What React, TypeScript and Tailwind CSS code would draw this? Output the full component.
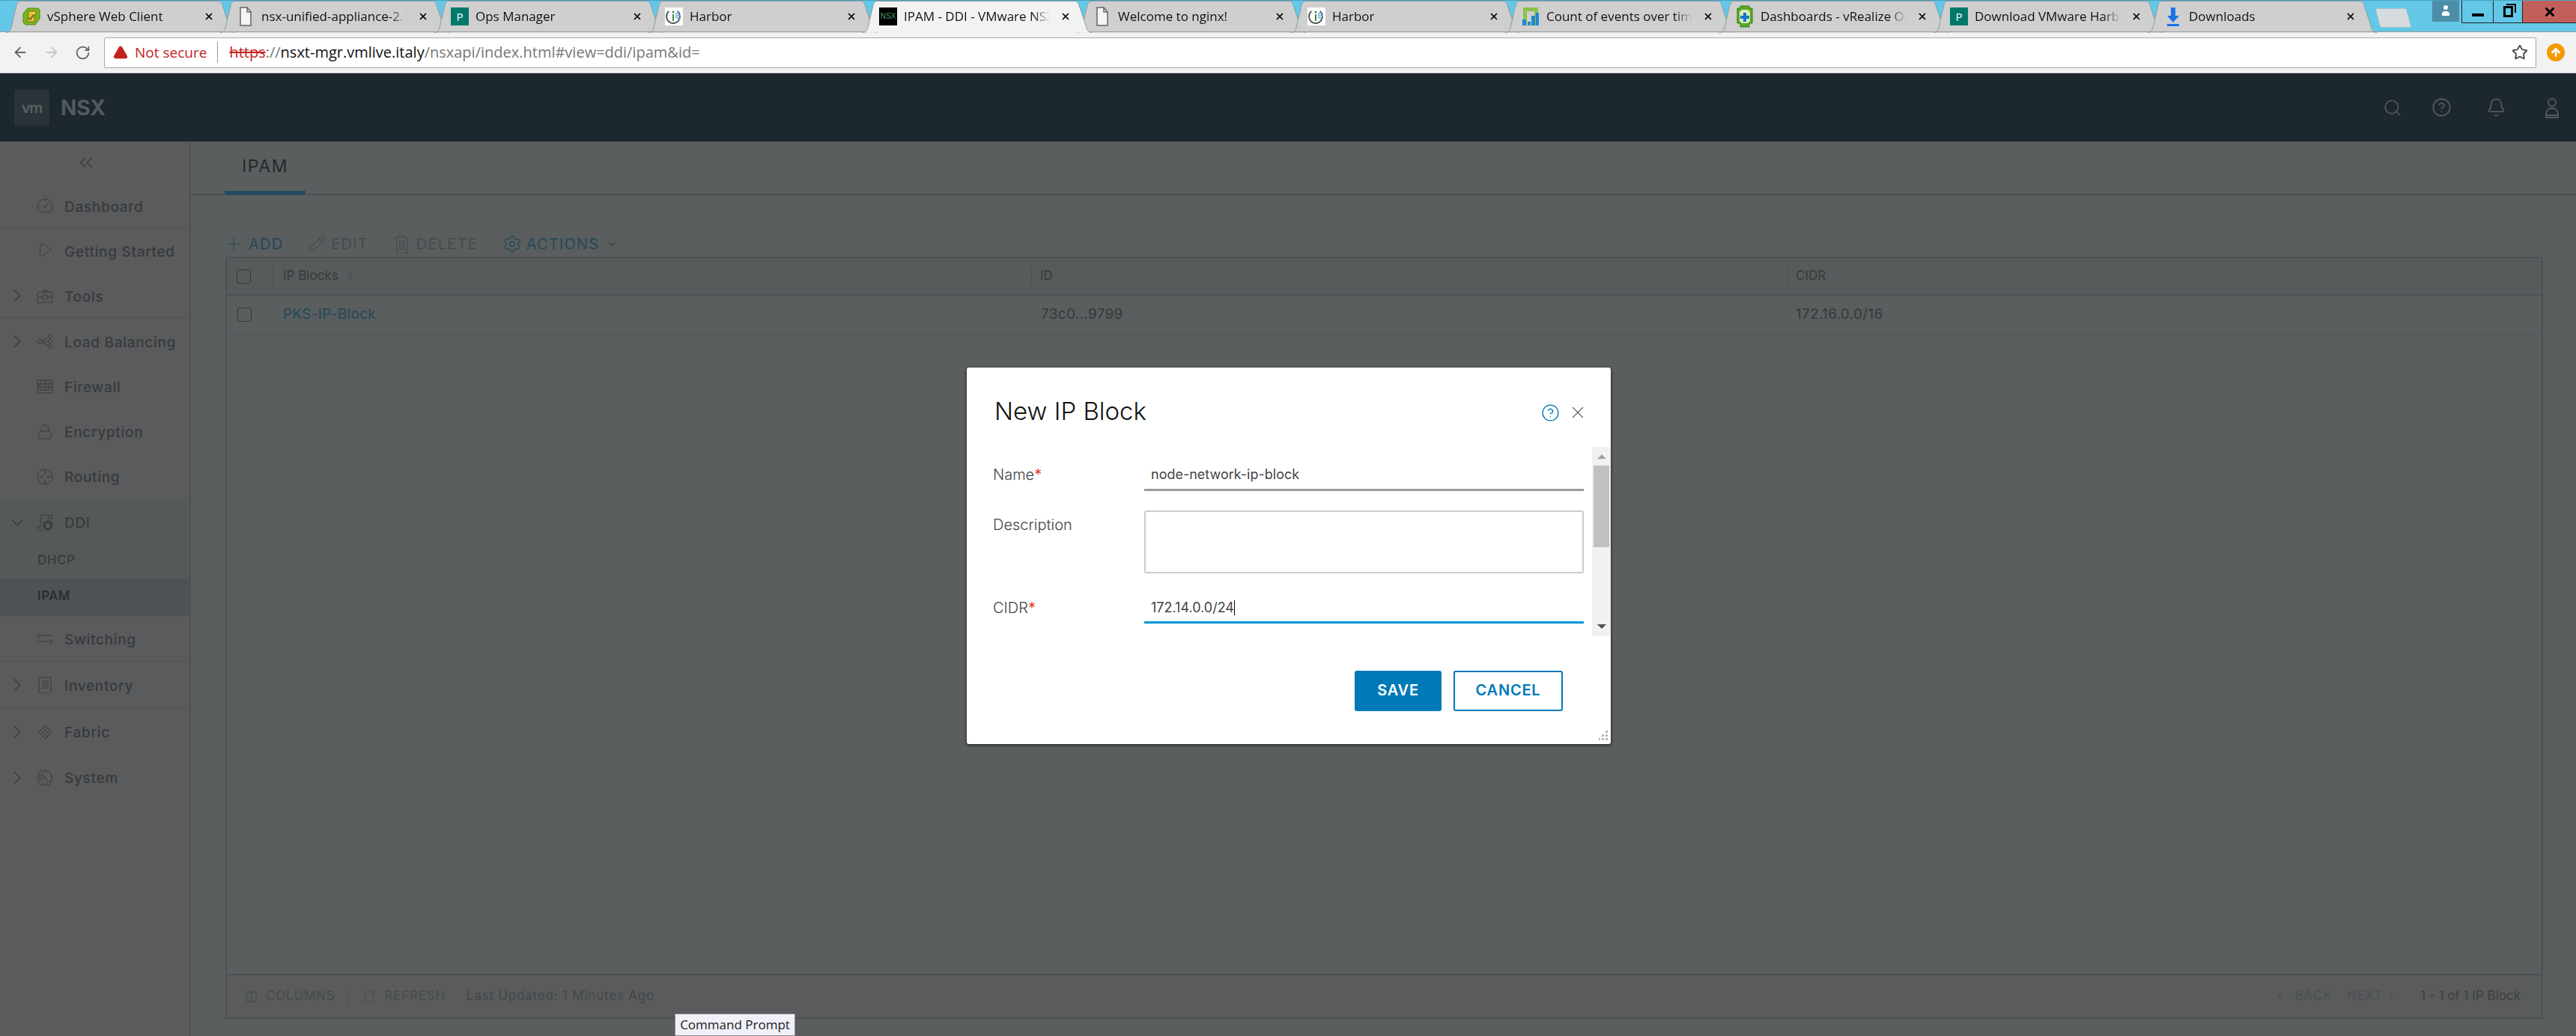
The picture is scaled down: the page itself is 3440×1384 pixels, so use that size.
import type { ReactNode } from 'react';
import { ArrowLeft, ArrowRight, RotateCw, Star, ChevronRight, ChevronDown, ChevronLeft, ChevronsLeft, Play, Lock, Search, Bell, Plus, Pencil, Settings, ArrowUp, X, CircleHelp, Columns2, RefreshCw, TriangleAlert } from 'lucide-react';

function VsphereIcon() {
  return (
    <svg width="26" height="26" viewBox="0 0 26 26">
      <path d="M8 2h14l2 2v12l-6 8H5l-3-3V9z" fill="#7ab51d" stroke="#4d8a12" />
      <path d="M9 6h10v5h-5v4h-5zM17 13v7H7v-3h6v-4z" fill="#f0c63c" stroke="#6f6a20" />
    </svg>
  );
}

function DocIcon() {
  return (
    <svg width="18" height="26" viewBox="0 0 18 26" fill="#f4f4f4" stroke="#666" strokeWidth="1.5">
      <path d="M2 1h9l5 6v18H2z" />
      <path d="M11 1v6h5" fill="none" />
    </svg>
  );
}

function PIcon() {
  return <span className="w-6 h-6 bg-[#00796b] text-white text-[15px] leading-6 text-center font-['Open_Sans',sans-serif]">P</span>;
}

function HarborIcon() {
  return (
    <svg width="24" height="24" viewBox="0 0 24 24" className="bg-white">
      <circle cx="11" cy="12" r="9" fill="none" stroke="#555" strokeWidth="2" strokeDasharray="44 12" transform="rotate(-50 11 12)" />
      <path d="M10 9h2v9h-2z" fill="#3c8f3c" />
      <circle cx="11" cy="6" r="1.5" fill="#3c8f3c" />
      <path d="M14 9l6-3M14 11h7M14 13l6 2" stroke="#6ea8dc" strokeWidth="1.5" />
    </svg>
  );
}

function NsxIcon() {
  return <span className="w-6 h-6 bg-black text-[#4f9a6f] text-[10px] leading-6 text-center font-['Liberation_Sans',sans-serif]">NSX</span>;
}

function BarsIcon() {
  return (
    <svg width="24" height="26" viewBox="0 0 24 26">
      <path d="M2 1h20v24h-5V6H7v19H2z" fill="#8bc34a" />
      <path d="M1 17h5v8H1zM8 20h4v5H8zM13 12h5v13h-5zM19 8h4v17h-4z" fill="#1e88d2" />
    </svg>
  );
}

function VropsIcon() {
  return (
    <svg width="24" height="30" viewBox="0 0 24 30">
      <path d="M6 1h12v3h4v20h-4v5H6v-5H2V4h4z" fill="#5cab1e" stroke="#2e7d12" />
      <path d="M7 6h10v2h2v14h-2v2H7v-2H5V8h2z" fill="#d7ecc0" />
      <path d="M10 10h4v4h4v4h-4v4h-4v-4H6v-4h4z" fill="#1976c8" />
    </svg>
  );
}

function DownloadIcon() {
  return (
    <svg width="18" height="26" viewBox="0 0 18 26" fill="#1a73e8">
      <path d="M6 1h6v11h5l-8 9-8-9h5z" />
      <path d="M1 23h16v3H1z" />
    </svg>
  );
}

const tabs = [
  { title: 'vSphere Web Client', icon: <VsphereIcon /> },
  { title: 'nsx-unified-appliance-2.1', icon: <DocIcon /> },
  { title: 'Ops Manager', icon: <PIcon /> },
  { title: 'Harbor', icon: <HarborIcon /> },
  { title: 'IPAM - DDI - VMware NSX', icon: <NsxIcon />, active: true },
  { title: 'Welcome to nginx!', icon: <DocIcon /> },
  { title: 'Harbor', icon: <HarborIcon /> },
  { title: 'Count of events over time', icon: <BarsIcon /> },
  { title: 'Dashboards - vRealize Operations', icon: <VropsIcon /> },
  { title: 'Download VMware Harbor', icon: <PIcon /> },
  { title: 'Downloads', icon: <DownloadIcon /> },
];

function ChromeTab({ title, icon, active }: { title: string; icon: ReactNode; active?: boolean }) {
  return (
    <div className={`relative w-[306px] h-[43px] shrink-0 -ml-[20px] first:ml-0 ${active ? 'z-10' : ''}`}>
      <svg width="306" height="43" className="absolute inset-0">
        <path
          d="M0 42.5C4 42.5 6 40 7 36L14 6C15 2 17 .5 20 .5H283C286 .5 288 2 289 6L299 36C300 40 302 42.5 306 42.5"
          fill={active ? '#f2f2f2' : '#cfcfcf'}
          stroke="#8f9ba0"
        />
      </svg>
      <div className="relative h-full flex items-center pl-[21px] pr-[28px] pb-[2px]">
        <div className="w-[26px] flex justify-center shrink-0">{icon}</div>
        <span className="ml-[8px] w-[195px] whitespace-nowrap overflow-hidden text-[17px] text-[#111] [mask-image:linear-gradient(to_right,black_88%,transparent)]">
          {title}
        </span>
        <X className="ml-auto w-[14px] h-[14px] text-black" strokeWidth={3} />
      </div>
    </div>
  );
}

function TabStrip() {
  return (
    <div className="relative h-[43px] flex pl-[8px] bg-[#63c8e8] border-t border-[#4a9fbc] font-['Open_Sans',sans-serif]">
      {tabs.map((t, i) => (
        <ChromeTab key={i} title={t.title} icon={t.icon} active={t.active} />
      ))}
      <div className="w-[42px] h-[26px] ml-[1px] mt-[10px] bg-[#d6dcde] border border-[#a9c4cf] rounded-[3px] [transform:skewX(15deg)]" />
      <div className="ml-auto flex items-start">
        <div className="w-[36px] h-[28px] mr-[3px] bg-[#4c8ea8] flex justify-center pt-[5px]">
          <svg width="16" height="16" viewBox="0 0 16 16" fill="#fff">
            <circle cx="8" cy="4" r="3" />
            <path d="M3 15v-4l3-2h4l3 2v4z" />
          </svg>
        </div>
        <div className="w-[42px] h-[30px] border-b border-l border-[#222] flex items-end justify-center pb-[8px]">
          <span className="w-[16px] h-[4px] bg-black" />
        </div>
        <div className="w-[39px] h-[30px] border-b border-l border-[#222] flex items-center justify-center">
          <span className="relative w-[13px] h-[15px] border-[3px] border-black">
            <span className="absolute -top-[6px] left-[1px] w-[13px] h-[12px] border-t-[2px] border-r-[2px] border-black" />
          </span>
        </div>
        <div className="w-[72px] h-[30px] bg-[#c1605a] border-b border-l border-[#222] flex items-center justify-center">
          <X className="w-[18px] h-[18px] text-black" strokeWidth={4} />
        </div>
      </div>
      <div className="absolute left-0 right-0 bottom-0 h-px bg-[#9a9a9a]" />
    </div>
  );
}

function AddressBar() {
  return (
    <div className="h-[55px] flex items-center bg-[#f2f2f2] border-b border-[#c0c0c0] font-['Open_Sans',sans-serif]">
      <div className="w-[139px] flex items-center shrink-0 pl-[16px] gap-[20px]">
        <ArrowLeft className="w-[22px] h-[22px] text-[#5f6368]" />
        <ArrowRight className="w-[22px] h-[22px] text-[#c4c6c8]" />
        <RotateCw className="w-[21px] h-[21px] text-[#5f6368]" />
      </div>
      <div className="w-[3248px] h-[41px] flex items-center pl-[11px] pr-[10px] bg-white border border-[#a9a9a9] rounded-[2px] text-[20px] whitespace-nowrap">
        <TriangleAlert className="w-[20px] h-[20px] text-[#c5221f] fill-[#c5221f] stroke-[#c5221f]" />
        <span className="ml-[9px] text-[19px] text-[#c5221f]">Not secure</span>
        <span className="ml-[14px] mr-[15px] w-px h-[28px] bg-[#999]" />
        <span className="text-[#c5221f] line-through">https</span>
        <span className="text-[#777]">://</span>
        <span className="text-[#111]">nsxt-mgr.vmlive.italy</span>
        <span className="text-[#777]">/nsxapi/index.html#view=ddi/ipam&amp;id=</span>
        <Star className="ml-auto w-[22px] h-[22px] text-[#444]" />
      </div>
      <div className="ml-[14px] w-[24px] h-[24px] rounded-full bg-[#f29900] flex items-center justify-center">
        <ArrowUp className="w-[16px] h-[16px] text-white" strokeWidth={4} />
      </div>
    </div>
  );
}

function TopHeader() {
  return (
    <div className="h-[91px] flex items-center pl-[19px] pr-[19px] bg-[#1c272e] font-['Inter',sans-serif]">
      <div className="w-[47px] h-[48px] bg-[#2a3338] rounded-[2px] flex items-center justify-center text-[#5b6063] text-[20px] font-semibold tracking-[-1px]">vm</div>
      <span className="ml-[15px] text-[28px] font-bold text-[#53595c]">NSX</span>
      <div className="ml-auto flex items-center text-[#53585b]">
        <Search className="w-[26px] h-[26px]" strokeWidth={1.6} />
        <CircleHelp className="ml-[39px] w-[27px] h-[27px]" strokeWidth={1.6} />
        <Bell className="ml-[46px] w-[27px] h-[27px]" strokeWidth={1.6} />
        <svg width="26" height="28" viewBox="0 0 26 28" fill="none" stroke="currentColor" strokeWidth="1.8" className="ml-[48px]">
          <circle cx="13" cy="7" r="5" />
          <path d="M5 24v-4l4-5h8l4 5v4zM5 24h16v3H5z" />
        </svg>
      </div>
    </div>
  );
}

function NavSvg({ children }: { children: ReactNode }) {
  return (
    <svg width="22" height="22" viewBox="0 0 22 22" fill="none" stroke="currentColor" strokeWidth="1">
      {children}
    </svg>
  );
}

const navIcons: Record<string, ReactNode> = {
  Dashboard: (
    <NavSvg>
      <path d="M4 19H18C20 17 21 15 21 12A10 10 0 0 0 1 12C1 15 2 17 4 19Z" />
      <path d="M11 12l5-4M3 12h2M17 12h2M11 4v2" />
      <circle cx="11" cy="12" r="1" fill="currentColor" />
    </NavSvg>
  ),
  'Getting Started': <Play className="w-[24px] h-[24px] -translate-y-[2px]" strokeWidth={1} />,
  Tools: (
    <NavSvg>
      <path d="M1 8q0-2 2-2h16q2 0 2 2v12H1zM1 13h7M14 13h7M8 4h6V6H8zM8 10h6v6H8z" />
    </NavSvg>
  ),
  'Load Balancing': (
    <NavSvg>
      <circle cx="4" cy="11" r="3" />
      <circle cx="18" cy="4" r="2.5" />
      <circle cx="18" cy="11" r="2.5" />
      <circle cx="18" cy="18" r="2.5" />
      <path d="M7 10l9-5M7 11h8M7 12l9 5" />
    </NavSvg>
  ),
  Firewall: (
    <NavSvg>
      <path d="M1 2h20v17H1zM1 7h20M1 11h20M1 15h20M6 2v5M12 2v5M17 2v5M4 7v4M10 7v4M16 7v4M6 11v4M12 11v4M17 11v4" />
    </NavSvg>
  ),
  Encryption: <Lock className="w-[22px] h-[22px]" strokeWidth={1} />,
  Routing: (
    <NavSvg>
      <circle cx="11" cy="11" r="10" />
      <path d="M11 3v5M9 5l2-2 2 2M11 19v-5M9 17l2 2 2-2M3 11h5M6 9l2 2-2 2M19 11h-5M16 9l-2 2 2 2" />
    </NavSvg>
  ),
  DDI: (
    <NavSvg>
      <path d="M8 1h13v5h-5V1M8 1q-3 0-3 3v13M5 17H1v2q0 2 2 2h6" />
      <circle cx="15" cy="15" r="5" strokeWidth="3" />
    </NavSvg>
  ),
  Switching: (
    <NavSvg>
      <path d="M1 6h20M5 2L1 6l4 4M1 14h20M17 10l4 4-4 4" />
    </NavSvg>
  ),
  Inventory: (
    <NavSvg>
      <path d="M3 1h16v21H3zM7 6h9M7 9h9M7 12h9M7 15h9" />
    </NavSvg>
  ),
  Fabric: (
    <NavSvg>
      <path d="M2 11L11 2M5 15L15 5M8 18L18 8M11 20L20 11M2 11l9 9M5 8l10 10M8 5l10 10M11 2l9 9" />
    </NavSvg>
  ),
  System: (
    <NavSvg>
      <path d="M9 1h4l1 3 3-1 3 3-2 3 3 1v4l-3 1 1 3-3 3-3-2-1 3H9l-1-3-3 2-3-3 2-3-3-1V9l3-1-2-3 3-3 3 2z" />
      <path d="M8 7l8 10M8 7a3 3 0 1 0 2 3" />
    </NavSvg>
  ),
};

const navItems: { label: string; h: string; chevron?: 'right' | 'down'; line?: boolean }[] = [
  { label: 'Dashboard', h: 'h-[60px]', line: true },
  { label: 'Getting Started', h: 'h-[60px]' },
  { label: 'Tools', h: 'h-[60px]', chevron: 'right', line: true },
  { label: 'Load Balancing', h: 'h-[61px]', chevron: 'right' },
  { label: 'Firewall', h: 'h-[60px]' },
  { label: 'Encryption', h: 'h-[60px]' },
  { label: 'Routing', h: 'h-[60px]' },
];

const navItemsBelow: typeof navItems = [
  { label: 'Switching', h: 'h-[61px]', line: true },
  { label: 'Inventory', h: 'h-[62px]', chevron: 'right', line: true },
  { label: 'Fabric', h: 'h-[62px]', chevron: 'right' },
  { label: 'System', h: 'h-[60px]', chevron: 'right' },
];

function NavRow({ label, h, chevron, line }: (typeof navItems)[number]) {
  return (
    <div className={`${h} flex items-center pt-[5px] text-[#383a3c] ${line ? 'border-b border-[#505254]' : ''}`}>
      <div className="w-[49px] pl-[9px] shrink-0 -translate-y-[2px]">
        {chevron === 'right' && <ChevronRight className="w-[30px] h-[30px] -ml-[1px]" strokeWidth={1} />}
        {chevron === 'down' && <ChevronDown className="w-[28px] h-[28px]" strokeWidth={1} />}
      </div>
      <div className="w-[22px] h-[22px] flex items-center justify-center -translate-y-[2px]">{navIcons[label]}</div>
      <span className="ml-[15px] text-[19px] font-medium tracking-[0.7px] whitespace-nowrap">{label}</span>
    </div>
  );
}

function Sidebar() {
  return (
    <aside className="w-[255px] shrink-0 bg-[#595b5d] border-r-2 border-[#4e5052] font-['Inter',sans-serif]">
      <div className="h-[56px] flex items-center pl-[100px] text-[#383a3c]">
        <ChevronsLeft className="w-[30px] h-[30px]" strokeWidth={1} />
      </div>
      {navItems.map((n) => (
        <NavRow key={n.label} {...n} />
      ))}
      <div className="bg-[#56595a]">
        <NavRow label="DDI" h="h-[62px]" chevron="down" />
        <div className="h-[45px] pl-[50px] pb-[3px] flex items-center text-[#383a3c] text-[17px] font-medium tracking-[0.5px]">DHCP</div>
        <div className="h-[50px] pl-[50px] pb-[2px] flex items-center bg-[#4d5355] text-[#26292b] text-[17px] font-medium tracking-[0.5px]">IPAM</div>
      </div>
      {navItemsBelow.map((n) => (
        <NavRow key={n.label} {...n} />
      ))}
    </aside>
  );
}

function Checkbox() {
  return <span className="block w-[19px] h-[19px] border border-[#37393b] rounded-[3px]" />;
}

function IpamPanel() {
  return (
    <main className="flex-1 flex flex-col bg-[#5a5e5f] font-['Inter',sans-serif]">
      <div className="h-[72px] shrink-0 pl-[45px] border-b-2 border-[#4d5052]">
        <div className="w-[108px] h-[71px] flex items-center justify-center border-b-[5px] border-[#1f4a5f] text-[23px] text-[#26292b] tracking-[1.6px]">IPAM</div>
      </div>
      <div className="flex-1 flex flex-col pl-[46px] pr-[44px] pb-[23px]">
        <div className="h-[82px] shrink-0 flex items-end text-[20px] tracking-[1.2px]">
          <div className="h-[34px] flex items-center whitespace-nowrap">
            <span className="flex items-center gap-[6px] text-[#25485a]">
              <Plus className="w-[28px] h-[28px] -ml-[3px]" strokeWidth={1} />
              ADD
            </span>
            <span className="ml-[33px] flex items-center gap-[7px] text-[#484b4d]">
              <Pencil className="w-[24px] h-[24px]" strokeWidth={1.2} />
              EDIT
            </span>
            <span className="ml-[33px] flex items-center gap-[7px] text-[#484b4d]">
              <svg width="24" height="28" viewBox="0 0 24 28" fill="none" stroke="currentColor" strokeWidth="1.2">
                <path d="M3 5h18M9 5V2h6v3M5 5v21h14V5M9 9v13M12 9v13M15 9v13" />
              </svg>
              DELETE
            </span>
            <span className="ml-[33px] flex items-center gap-[6px] text-[#25485a]">
              <Settings className="w-[26px] h-[26px]" strokeWidth={1.2} />
              ACTIONS
              <ChevronDown className="ml-[4px] w-[14px] h-[14px] text-[#3a3d3f]" strokeWidth={2} />
            </span>
          </div>
        </div>
        <div className="flex-1 flex flex-col border-2 border-[#4e5153] rounded-[3px] text-[19px] tracking-[0.3px]">
          <div className="h-[50px] shrink-0 grid grid-cols-[61px_1014px_1009px_1fr] items-center bg-[#585b5c] border-b-2 border-[#4e5153] text-[17px] tracking-normal text-[#37393b]">
            <div className="pl-[13px] h-[30px] flex items-center border-r border-[#4e5153]"><Checkbox /></div>
            <div className="pl-[14px] h-[30px] flex items-center gap-[8px] border-r border-[#4e5153]">
              IP Blocks
              <ArrowUp className="w-[16px] h-[16px] text-[#25485a]" strokeWidth={1.3} />
            </div>
            <div className="pl-[11px] h-[30px] flex items-center border-r border-[#4e5153]">ID</div>
            <div className="pl-[11px] h-[30px] flex items-center">CIDR</div>
          </div>
          <div className="h-[52px] shrink-0 grid grid-cols-[61px_1014px_1009px_1fr] items-center border-b border-[#525557] text-[#37393b]">
            <div className="pl-[14px]"><Checkbox /></div>
            <div className="pl-[14px] text-[#25485a]">PKS-IP-Block</div>
            <div className="pl-[12px]">73c0...9799</div>
            <div className="pl-[11px]">172.16.0.0/16</div>
          </div>
          <div className="flex-1" />
          <div className="h-[58px] shrink-0 flex items-center pl-[24px] pr-[28px] bg-[#595b5c] border-t-2 border-[#4e5153] text-[17px] tracking-[0.8px] text-[#484b4d] whitespace-nowrap">
            <Columns2 className="w-[17px] h-[17px]" strokeWidth={1.5} />
            <span className="ml-[11px]">COLUMNS</span>
            <span className="ml-[18px] w-px h-[22px] bg-[#4e5153]" />
            <RefreshCw className="ml-[18px] w-[18px] h-[18px]" strokeWidth={1.2} />
            <span className="ml-[11px]">REFRESH</span>
            <span className="ml-[28px] text-[#44474a]">Last Updated: 1 Minutes Ago</span>
            <span className="ml-auto flex items-center text-[#4d5052]">
              <ChevronLeft className="w-[18px] h-[18px]" strokeWidth={1.5} />
              <span className="ml-[11px]">BACK</span>
              <span className="ml-[20px]">NEXT</span>
              <ChevronRight className="ml-[2px] w-[18px] h-[18px]" strokeWidth={1.5} />
            </span>
            <span className="ml-[30px] text-[#3d3f41] tracking-normal">1 - 1 of 1 IP Block</span>
          </div>
        </div>
      </div>
    </main>
  );
}

function FormRow({ label, required, children, className, labelClassName }: { label: string; required?: boolean; children: ReactNode; className: string; labelClassName?: string }) {
  return (
    <div className={`flex ${className}`}>
      <label className={`w-[202px] shrink-0 text-[20px] leading-[28px] font-light text-[#444] ${labelClassName ?? ''}`}>
        {label}
        {required && <span className="text-[#e12200]">*</span>}
      </label>
      <div className="flex-1">{children}</div>
    </div>
  );
}

function NewIpBlockModal() {
  return (
    <div className="absolute left-[1291px] top-[491px] w-[860px] h-[503px] flex flex-col bg-white rounded-[3px] shadow-[0_1px_4px_rgba(0,0,0,0.7)] font-['Inter',sans-serif]">
      <div className="h-[106px] shrink-0 flex items-center pl-[37px] pr-[31px] pt-[10px]">
        <h2 className="text-[33px] font-light text-[#111] leading-none">New IP Block</h2>
        <CircleHelp className="ml-auto mt-[4px] w-[25px] h-[25px] text-[#0079b8]" strokeWidth={1.3} />
        <X className="ml-[11px] mt-[4px] w-[26px] h-[26px] text-[#666]" strokeWidth={1.2} />
      </div>
      <div className="h-[253px] shrink-0 flex">
        <div className="flex-1 pl-[35px] pr-[11px] pt-[23px]">
          <FormRow label="Name" required className="h-[60px]">
            <div className="h-[36px] pl-[9px] border-b-[3px] border-[#9a9a9a] text-[18px] leading-[28px] text-[#444]">node-network-ip-block</div>
          </FormRow>
          <FormRow label="Description" labelClassName="pt-[7px]" className="h-[118px]">
            <div className="h-[84px] mt-[2px] border-2 border-[#cccccc] rounded-[3px]" />
          </FormRow>
          <FormRow label="CIDR" required className="h-[35px]">
            <div className="h-[35px] pl-[9px] flex items-start border-b-[3px] border-[#0095d3] text-[18px] leading-[28px] text-[#444]">
              172.14.0.0/24
              <span className="mt-[4px] w-px h-[20px] bg-black" />
            </div>
          </FormRow>
        </div>
        <div className="w-[25px] shrink-0 bg-[#f1f1f1] flex flex-col items-center">
          <span className="mt-[10px] w-0 h-0 border-x-[6px] border-x-transparent border-b-[6px] border-b-[#a3a3a3]" />
          <span className="mt-[9px] w-[21px] h-[109px] bg-[#c1c1c1]" />
          <span className="mt-auto mb-[10px] w-0 h-0 border-x-[6px] border-x-transparent border-t-[6px] border-t-[#505050]" />
        </div>
      </div>
      <div className="relative flex-1 flex justify-end items-start pt-[46px] pr-[64px] gap-[16px] text-[20px] font-semibold tracking-[0.8px]">
        <button className="w-[116px] h-[54px] pb-[2px] bg-[#0079b8] text-white rounded-[3px]">SAVE</button>
        <button className="w-[146px] h-[54px] pb-[2px] bg-white text-[#0079b8] border-2 border-[#0079b8] rounded-[3px]">CANCEL</button>
        <svg width="14" height="16" viewBox="0 0 14 16" fill="#b5b5b5" className="absolute right-[2px] bottom-[2px]">
          <path d="M9 0h3v3H9zM9 5h3v3H9zM4 5h3v3H4zM9 10h3v3H9zM4 10h3v3H4zM0 10h2v3H0z" />
        </svg>
      </div>
    </div>
  );
}

export default function App() {
  return (
    <div className="relative w-[3440px] h-[1384px] flex flex-col overflow-hidden">
      <TabStrip />
      <AddressBar />
      <TopHeader />
      <div className="flex-1 flex min-h-0">
        <Sidebar />
        <IpamPanel />
      </div>
      <NewIpBlockModal />
      <div className="absolute left-[901px] top-[1354px] w-[161px] h-[30px] flex items-center justify-center bg-[#f0f0f8] border border-[#8a8a8a] text-[17px] text-[#222] font-['Open_Sans',sans-serif]">
        Command Prompt
      </div>
    </div>
  );
}
